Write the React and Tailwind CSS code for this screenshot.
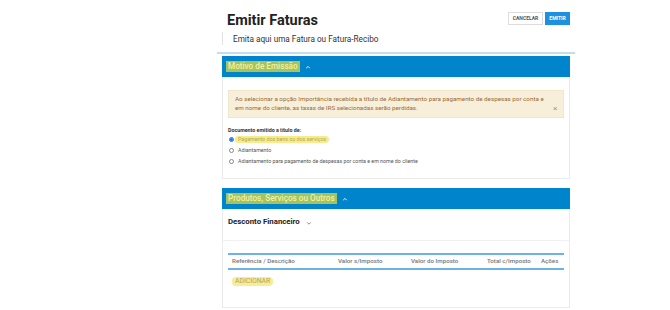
import { useState } from "react";

const Hl = ({ children, className = "" }) => (
  <span className={`px-[3px] rounded-sm ${className}`}>{children}</span>
);

const SectionHeader = ({ title }) => (
  <div className="flex items-center h-[21px] bg-[#0085cc] px-[4px]">
    <span className="px-[2px] bg-[#a4c45e] text-[#f3f0a4] text-[8.2px] font-medium leading-[11px]">
      {title}
    </span>
    <svg width="6" height="6" viewBox="0 0 10 10" className="ml-[5px]">
      <path d="M2 7 L5 4 L8 7" stroke="#e8f4ff" strokeWidth="1.6" fill="none" />
    </svg>
  </div>
);

const Radio = ({ checked, label, highlight }) => (
  <label className="flex items-center h-[11px]">
    <span
      className={`w-[5px] h-[5px] rounded-full border flex items-center justify-center ${
        checked ? "border-[#1a73e8]" : "border-[#888]"
      }`}
    >
      {checked && <span className="w-[3px] h-[3px] rounded-full bg-[#1a73e8]" />}
    </span>
    {highlight ? (
      <Hl className="ml-[1px] bg-[#f7ec8c] text-[#b3a85e]">{label}</Hl>
    ) : (
      <span className="ml-[4px] text-[#555]">{label}</span>
    )}
  </label>
);

export default function App() {
  const [open] = useState(true);

  return (
    <div
      className="w-[670px] h-[310px] bg-white overflow-hidden"
      style={{ fontFamily: "Roboto, 'Liberation Sans', sans-serif" }}
    >
      <div className="ml-[217px] w-[358px]">
        <div className="flex items-start justify-between pl-[10px] pr-[5px] pt-[12px] h-[32px]">
          <h1 className="text-[14.5px] font-bold text-[#222] leading-[18px]">Emitir Faturas</h1>
          <div className="flex gap-[2px]">
            <button className="h-[13px] w-[35px] border border-[#ddd] bg-white text-[5px] font-bold text-[#555]">
              CANCELAR
            </button>
            <button className="h-[13px] w-[25px] bg-[#1e90e0] text-[5px] font-bold text-white">
              EMITIR
            </button>
          </div>
        </div>
        <div className="ml-[5px] border-l border-[#e2e2e2] pl-[10px] h-[13px] flex items-center pt-[1px] text-[8.2px] text-[#333]">
          Emita aqui uma Fatura ou Fatura-Recibo
        </div>
        <div className="mt-[7px] h-[2px] bg-[#c2dcf0]" />

        <div className="mx-[5px] mt-[2px]">
          <SectionHeader title="Motivo de Emissão" />
          {open && (
            <div className="border border-t-0 border-[#ebebeb] px-[5px] pt-[13px] pb-[11px]">
              <div className="bg-[#f7efd9] border border-[#f0e6c8] pl-[6px] pr-[4px] py-[4px] text-[6.25px] leading-[9px] text-[#9a6b3b] flex">
                <span className="flex-1">
                  Ao selecionar a opção Importância recebida a título de Adiantamento para pagamento de despesas por conta e em nome do cliente, as taxas de IRS selecionadas serão perdidas.
                </span>
                <span className="self-end w-[6px] text-[#999] text-[8px] leading-[9px]">×</span>
              </div>
              <div className="mt-[9px] text-[5.3px] font-bold text-[#333] leading-[7px]">Documento emitido a título de:</div>
              <div className="pl-[1px] text-[5.3px] flex flex-col">
                <Radio checked highlight label="Pagamento dos bens ou dos serviços" />
                <Radio label="Adiantamento" />
                <Radio label="Adiantamento para pagamento de despesas por conta e em nome do cliente" />
              </div>
            </div>
          )}

          <div className="mt-[9px]">
            <SectionHeader title="Produtos, Serviços ou Outros" />
            <div className="border border-t-0 border-[#ebebeb]">
              <div className="h-[32px] px-[5px] pt-[8px] flex items-start border-b border-[#f0f0f0]">
                <span className="text-[7.8px] font-bold text-[#222] leading-[10px]">Desconto Financeiro</span>
                <svg width="6" height="6" viewBox="0 0 10 10" className="ml-[6px] mt-[3px]">
                  <path d="M2 4 L5 7 L8 4" stroke="#777" strokeWidth="1.4" fill="none" />
                </svg>
              </div>
              <div className="px-[5px] pt-[12px] pb-[21px]">
                <div className="grid grid-cols-[110px_73px_76px_54px_1fr] items-center h-[17px] border-y-2 border-[#6cb2e4] text-[6.2px] font-medium text-[#777]">
                  <span className="pl-[4px]">Referência / Descrição</span>
                  <span>Valor s/Imposto</span>
                  <span>Valor do Imposto</span>
                  <span>Total c/Imposto</span>
                  <span>Ações</span>
                </div>
                <div className="mt-[6px] ml-[4px] h-[10px] flex items-center">
                  <Hl className="bg-[#f7ec97] text-[#aea662] text-[6.8px] leading-[9px]">ADICIONAR</Hl>
                </div>
              </div>
            </div>
          </div>
        </div>
      </div>
    </div>
  );
}
